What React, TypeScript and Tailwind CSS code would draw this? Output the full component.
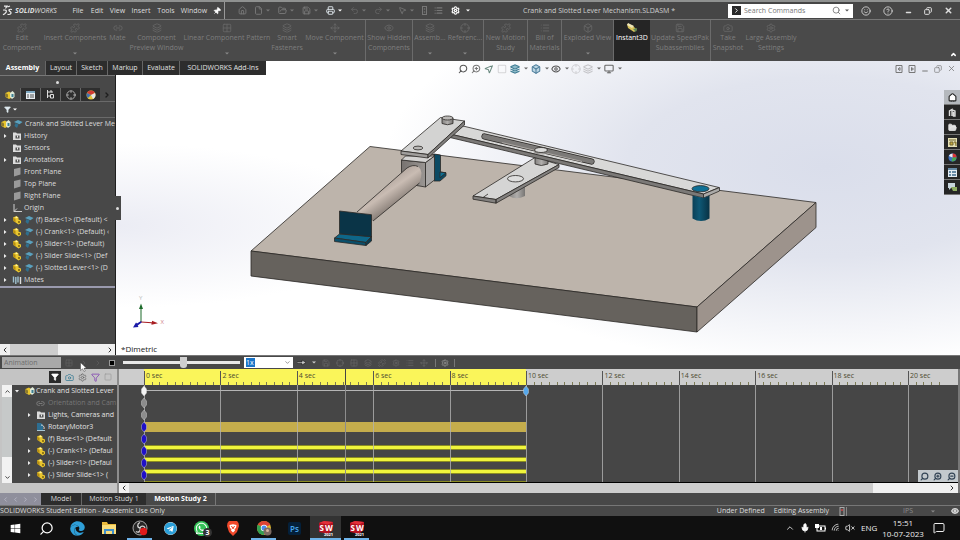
import React from 'react';
import {
  Box, Camera, ChevronDown, ChevronLeft, ChevronRight, ChevronUp, CircleHelp, Copy, Eye, File, Filter,
  FolderOpen, House, List, Link2, Minus, Monitor, MousePointer2, Pin, Printer, Redo2, Save, Search, Settings,
  Smile, Square, Undo2, X, ZoomIn, ZoomOut, Grid2x2, Crosshair, Puzzle, Layers, Mic, Move, MessageSquare, Wifi, VolumeX,
} from 'lucide-react';
import { FaEdge, FaTelegram, FaWhatsapp, FaWindows } from 'react-icons/fa';

type IconType = React.ComponentType<{ size?: number; className?: string; strokeWidth?: number }>;

const Caret = ({ className = 'text-[#8a8a8a]' }: { className?: string }) => (
  <svg viewBox="0 0 4 3" className={`h-[3px] w-1 ${className}`}>
    <path d="M0 .5h4L2 2.5z" fill="currentColor" />
  </svg>
);

/* ---------- title bar ---------- */

const menus = [
  ['File', 'w-[18px]'], ['Edit', 'w-[20px]'], ['View', 'w-[21px]'],
  ['Insert', 'w-[26px]'], ['Tools', 'w-[24px]'], ['Window', 'w-[32px]'],
];

const quick: { icon: IconType; label: string; caret?: boolean; tone: string }[] = [
  { icon: House, label: 'Home', tone: 'text-[#777]' },
  { icon: File, label: 'New', caret: true, tone: 'text-[#777]' },
  { icon: FolderOpen, label: 'Open', caret: true, tone: 'text-[#777]' },
  { icon: Save, label: 'Save', caret: true, tone: 'text-[#777]' },
  { icon: Printer, label: 'Print', caret: true, tone: 'text-[#dfe6ec]' },
  { icon: Undo2, label: 'Undo', caret: true, tone: 'text-[#626262]' },
  { icon: Redo2, label: 'Redo', caret: true, tone: 'text-[#626262]' },
  { icon: MousePointer2, label: 'Select', caret: true, tone: 'text-[#707070]' },
];

function TitleBar() {
  return (
    <header className="flex h-5 shrink-0 items-center border-t-2 border-b border-t-[#8f9190] border-b-[#777] bg-[#464646] text-[#dedede]">
      <div className="flex w-[69px] items-center pl-[2px]">
        <svg viewBox="0 0 11 11" className="h-[11px] w-[11px]" fill="none" stroke="#eee" strokeWidth="1.2">
          <path d="M2 1.2h3L3.500 3.500M1.200 5.200c4-.8 4 1.500 1.500 3.600L1 9.800 M10 4.500c-3-.8-4 .8-2 2 2 1.200 1 3.400-2.500 2.900M5.500 2L8 1" />
        </svg>
        <span className="ml-[2px] text-[7px] leading-[10px] italic"><b>SOLID</b>WORKS</span>
      </div>
      <nav className="flex">
        {menus.map(([m, w]) => (
          <button key={m} className={`${w} text-center text-[7px] leading-[10px]`}>{m}</button>
        ))}
      </nav>
      <button aria-label="Pin menu" className="flex w-[14px] justify-center">
        <Pin size={8} className="rotate-45 fill-white text-white" />
      </button>
      <div className="flex h-full items-center border-l border-[#999] pl-[13px]">
        {quick.map(({ icon: I, label, caret, tone }) => (
          <button key={label} aria-label={label} className={`flex items-center ${caret ? 'w-[24px]' : 'w-[16px]'} ${tone}`}>
            <I size={9} strokeWidth={2.500} />
            {caret && <span className="ml-[3px]"><Caret className={label === 'Print' ? 'text-white' : 'text-[#777]'} /></span>}
          </button>
        ))}
        <button aria-label="Rebuild" className="flex w-[12px]">
          <svg viewBox="0 0 5 9" className="h-[9px] w-[5px]"><rect x=".5" y=".5" width="4" height="8" fill="none" stroke="#777" /><circle cx="2.500" cy="3" r=".8" fill="#777" /><circle cx="2.500" cy="6" r=".8" fill="#777" /></svg>
        </button>
        <button aria-label="File properties" className="w-[17px] text-[#777]"><List size={9} strokeWidth={3} /></button>
        <button aria-label="Options" className="flex items-center text-white"><Settings size={9} strokeWidth={3} /><span className="ml-[6px]"><Caret className="text-white" /></span></button>
      </div>
      <h1 className="flex-1 text-center text-[7px] leading-[10px] font-normal text-[#cfcfcf]">Crank and Slotted Lever Mechanism.SLDASM *</h1>
      <label className="flex h-[14px] w-[125px] items-center bg-white">
        <span className="ml-1 mr-[3px] flex h-[9px] w-[9px] items-center justify-center bg-[#2a2a2a] text-white"><ChevronRight size={7} strokeWidth={3} /></span>
        <input aria-label="Search Commands" placeholder="Search Commands" className="w-0 flex-1 bg-transparent text-[7px] leading-[10px] outline-none placeholder:text-[#777]" />
        <Search size={9} className="text-[#666]" />
        <span className="mx-1"><Caret className="text-[#555]" /></span>
      </label>
      <div className="flex w-[107px] items-center justify-between pr-[7px] pl-2">
        <button aria-label="Account"><Smile size={10} /></button>
        <button aria-label="Help"><CircleHelp size={10} /></button>
        <button aria-label="Minimize" className="pt-1"><Minus size={7} strokeWidth={5} /></button>
        <button aria-label="Restore"><Copy size={8} strokeWidth={3} className="-scale-x-100" /></button>
        <button aria-label="Close"><X size={9} strokeWidth={4} /></button>
      </div>
    </header>
  );
}

/* ---------- ribbon ---------- */

const ribbon: { lines: string[]; w: string; icon: IconType; caret?: boolean; sep?: boolean; on?: boolean }[] = [
  { lines: ['Edit', 'Component'], w: 'w-[44px]', icon: Puzzle },
  { lines: ['Insert Components'], w: 'w-[62px]', icon: Puzzle, caret: true },
  { lines: ['Mate'], w: 'w-[23px]', icon: Link2 },
  { lines: ['Component', 'Preview Window'], w: 'w-[55px]', icon: Layers },
  { lines: ['Linear Component Pattern'], w: 'w-[86px]', icon: Grid2x2, caret: true },
  { lines: ['Smart', 'Fasteners'], w: 'w-[34px]', icon: Layers },
  { lines: ['Move Component'], w: 'w-[62px]', icon: Move, caret: true, sep: true },
  { lines: ['Show Hidden', 'Components'], w: 'w-[47px]', icon: Eye, sep: true },
  { lines: ['Assemb...'], w: 'w-[34px]', icon: Layers, caret: true },
  { lines: ['Referenc...'], w: 'w-[37px]', icon: Crosshair, caret: true, sep: true },
  { lines: ['New Motion', 'Study'], w: 'w-[44px]', icon: Puzzle, sep: true },
  { lines: ['Bill of', 'Materials'], w: 'w-[34px]', icon: List, sep: true },
  { lines: ['Exploded View'], w: 'w-[52px]', icon: Box, caret: true, sep: true },
  { lines: ['Instant3D'], w: 'w-[36px]', icon: Layers, on: true },
  { lines: ['Update SpeedPak', 'Subassemblies'], w: 'w-[61px]', icon: Save, sep: true },
  { lines: ['Take', 'Snapshot'], w: 'w-[34px]', icon: Camera },
  { lines: ['Large Assembly', 'Settings'], w: 'w-[52px]', icon: Settings },
];

function Ribbon() {
  return (
    <div className="flex h-[41px] shrink-0 bg-[#4a4a4a]">
      {ribbon.map(({ lines, w, icon: I, caret, sep, on }) => (
        <button
          key={lines[0]}
          className={`${w} flex shrink-0 flex-col items-center pt-[3px] text-[7px] leading-[10px] whitespace-nowrap ${sep ? 'border-r border-[#6b6b6b]' : ''} ${on ? 'bg-[#252525] text-white' : 'text-[#7e7e7e]'}`}
        >
          {on ? (
            <svg viewBox="0 0 12 10" className="h-[10px] w-3"><path d="M1 1l6 2 4 4-3 2-6-4z" fill="#d9c35a" /><path d="M2 0l6 3-2 2-5-3z" fill="#eee6b8" /><path d="M7 6l4-1-1 4z" fill="#5b8a5a" /></svg>
          ) : (
            <I size={10} className="text-[#686868]" />
          )}
          {lines.map((l) => <span key={l}>{l}</span>)}
          {caret && <span className="mt-[9px] h-[3px]"><Caret className="block text-[#888]" /></span>}
        </button>
      ))}
      <button aria-label="Collapse ribbon" className="ml-auto self-end p-[3px] text-white"><ChevronUp size={7} strokeWidth={5} /></button>
    </div>
  );
}

const commandTabs = [
  ['Assembly', 'w-[45px]'], ['Layout', 'w-[31px]'], ['Sketch', 'w-[31px]'],
  ['Markup', 'w-[35px]'], ['Evaluate', 'w-[37px]'], ['SOLIDWORKS Add-Ins', 'w-[87px]'],
];

const viewTools: { icon: IconType; tone: string; caret?: boolean; w: string }[] = [
  { icon: Search, tone: 'text-[#555] -scale-x-100', w: 'w-[13px]' },
  { icon: ZoomIn, tone: 'text-[#777] -scale-x-100', w: 'w-[13px]' },
  { icon: MousePointer2, tone: 'text-[#6b8a80] rotate-90', w: 'w-[13px]' },
  { icon: Square, tone: 'text-[#d5d5d8]', w: 'w-[13px]' },
  { icon: Layers, tone: 'text-[#3f7c93] fill-[#8db9c8]', caret: true, w: 'w-[21px]' },
  { icon: Box, tone: 'text-[#4f7f9c] fill-[#bcd6e4]', caret: true, w: 'w-[20px]' },
  { icon: Eye, tone: 'text-[#555]', caret: true, w: 'w-[20px]' },
  { icon: Crosshair, tone: 'text-[#d0d0d4]', w: 'w-[12px]' },
  { icon: Layers, tone: 'text-[#c4c4c8]', caret: true, w: 'w-[21px]' },
  { icon: Monitor, tone: 'text-[#666]', caret: true, w: 'w-[20px]' },
];

function TabsAndView() {
  return (
    <div className="flex h-[14px] shrink-0 items-stretch">
      <div role="tablist" className="flex shrink-0 bg-[#4a4a4a]">
        {commandTabs.map(([t, w], i) => (
          <button
            role="tab"
            key={t}
            aria-selected={i === 0}
            className={`${w} text-center text-[7px] leading-[14px] whitespace-nowrap ${i === 0 ? 'bg-[#4a4a4a] font-bold text-white' : 'border-l border-[#666] bg-[#2d2d2d] text-[#e2e2e2]'}`}
          >
            {t}
          </button>
        ))}
      </div>
      <div className="flex flex-1 items-center justify-center pt-px pr-20">
        {viewTools.map(({ icon: I, tone, caret, w }, i) => (
          <button key={i} aria-label={`View tool ${i + 1}`} className={`flex items-center ${w}`}>
            <I size={10} strokeWidth={2.500} className={tone} />
            {caret && <span className="ml-1"><Caret className="text-[#666]" /></span>}
          </button>
        ))}
      </div>
      <div className="flex w-[65px] shrink-0 items-center gap-[5px] pt-px text-[#777]">
        <button aria-label="Previous window"><svg viewBox="0 0 8 8" className="h-2 w-2" fill="none" stroke="currentColor"><path d="M1 .5h6v7H1zM5 2.500L3 4l2 1.500z" /></svg></button>
        <button aria-label="Next window"><svg viewBox="0 0 8 8" className="h-2 w-2" fill="none" stroke="currentColor"><path d="M1 .5h6v7H1zM3.500 2.500l2 1.500-2 1.500z" /></svg></button>
        <button aria-label="Minimize document" className="pt-1"><Minus size={8} strokeWidth={3} /></button>
        <button aria-label="Restore document"><Copy size={8} className="-scale-x-100" /></button>
        <button aria-label="Close document"><X size={9} /></button>
      </div>
    </div>
  );
}

/* ---------- feature tree ---------- */

const PartIcon = () => (
  <svg viewBox="0 0 10 10" className="h-[10px] w-[10px] shrink-0">
    <path d="M1 2.500L4.500 1l2 1.500v2L9 5.500v2.500L6.500 9.500 1.500 6z" fill="#e9c62f" />
    <path d="M1 2.500l2.500 1.500v3.500L1.500 6z" fill="#b58c12" />
    <path d="M3 2.300l1.500-.8 1.500.9-1.500.8z" fill="#fff3a8" />
    <circle cx="7" cy="7" r="1" fill="#7a6010" />
  </svg>
);
const AssemblyIcon = () => (
  <svg viewBox="0 0 10 10" className="h-[10px] w-[10px] shrink-0">
    <path d="M.5 3L4 1.500 6 3v5L4 9 .5 7z" fill="#e9c62f" />
    <path d="M.5 3L3 4.500v3L.5 7z" fill="#8e7a2b" />
    <path d="M5 3l2.500-2L9.500 3v4L7 9 5 7z" fill="#dfe9d8" />
    <path d="M6.500 4h2v3h-2z" fill="#3c7f94" />
  </svg>
);
const MateCap = () => (
  <svg viewBox="0 0 10 10" className="h-[10px] w-[10px] shrink-0">
    <path d="M1 3l4-2 4.500 2-3 2.200z" fill="#5aa0bd" />
    <path d="M2.500 4l3 1.500L4 9 1.500 7z" fill="#2f6f8e" />
  </svg>
);
const FolderIcon = () => (
  <svg viewBox="0 0 10 10" className="h-[10px] w-[10px] shrink-0">
    <path d="M1 1.500h3l1 1h4v6.500H1z" fill="#dcdcdc" />
    <path d="M3.500 4.500h4v3h-4z" fill="#555" /><path d="M5 4.500h1v2H5z" fill="#eee" />
  </svg>
);
const PlaneIcon = () => (
  <svg viewBox="0 0 10 10" className="h-[10px] w-[10px] shrink-0"><path d="M2 2L8.500.5v7L2 9.500z" fill="#9a9a9a" /></svg>
);
const OriginIcon = () => (
  <svg viewBox="0 0 10 10" className="h-[10px] w-[10px] shrink-0" fill="none" stroke="#cfcfcf"><path d="M2 1v7.500H10M2 8.500l3-3" /></svg>
);
const MatesIcon = () => (
  <svg viewBox="0 0 10 10" className="h-[10px] w-[10px] shrink-0" fill="none"><path d="M1.500 1.500v6M3.800 2v7M6 1.500v6" stroke="#9fc0cf" strokeWidth="1.400" /><path d="M8.500 2v7" stroke="#ddd" strokeWidth="1.400" /></svg>
);
const Expand = ({ show, open }: { show: boolean; open?: boolean }) => (
  <svg viewBox="0 0 4 4" className="h-1 w-1 shrink-0">{show && <path d={open ? 'M0 1h4L2 3.500z' : 'M1 0l2.500 2L1 4z'} fill="#eee" />}</svg>
);

const tree: { t: string; icon: React.ReactNode; exp?: boolean }[] = [
  { t: 'History', icon: <FolderIcon />, exp: true },
  { t: 'Sensors', icon: <FolderIcon /> },
  { t: 'Annotations', icon: <FolderIcon />, exp: true },
  { t: 'Front Plane', icon: <PlaneIcon /> },
  { t: 'Top Plane', icon: <PlaneIcon /> },
  { t: 'Right Plane', icon: <PlaneIcon /> },
  { t: 'Origin', icon: <OriginIcon /> },
  { t: '(f) Base<1> (Default) <', icon: <><PartIcon /><MateCap /></>, exp: true },
  { t: '(-) Crank<1> (Default) ‹', icon: <><PartIcon /><MateCap /></>, exp: true },
  { t: '(-) Slider<1> (Default)', icon: <><PartIcon /><MateCap /></>, exp: true },
  { t: '(-) Slider Slide<1> (Def', icon: <><PartIcon /><MateCap /></>, exp: true },
  { t: '(-) Slotted Lever<1> (D', icon: <><PartIcon /><MateCap /></>, exp: true },
  { t: 'Mates', icon: <MatesIcon />, exp: true },
];

function FeaturePanel() {
  return (
    <aside className="relative flex w-[116px] shrink-0 flex-col border-r border-[#1f1f1f] bg-[#484848] text-[#dcdcdc]">
      <div className="flex h-[13px] shrink-0 items-center justify-center border-t border-[#777]"><i className="h-[3px] w-[3px] rounded-full bg-[#ddd]" /></div>
      <div className="flex h-[13px] shrink-0 items-stretch">
        <button aria-label="Feature tree" className="flex w-5 items-center justify-center"><AssemblyIcon /></button>
        <button aria-label="Properties" className="flex w-5 items-center justify-center border-l border-[#666] bg-[#2e2e2e]">
          <svg viewBox="0 0 9 8" className="h-2 w-[9px]"><path d="M0 0h9v8H0z" fill="#e8eef2" /><path d="M0 0h9v2H0z" fill="#7fa9c2" /><path d="M1 4h2M4 4h4M1 6h2M4 6h4" stroke="#555" /></svg>
        </button>
        <button aria-label="Configurations" className="flex w-5 items-center justify-center border-l border-[#666] bg-[#2e2e2e]">
          <svg viewBox="0 0 9 9" className="h-[9px] w-[9px]" fill="none" stroke="#ddd"><path d="M1.500 0v8M1.500 2h4M4 1h2v2M4.500 4.500h3v3.500h-3zM1.500 6h3" /></svg>
        </button>
        <button aria-label="Dimensions" className="flex w-5 items-center justify-center border-l border-[#666] bg-[#2e2e2e]"><Crosshair size={10} className="text-[#bbb]" /></button>
        <button aria-label="Display" className="flex w-5 items-center justify-center border-l border-[#666] bg-[#2e2e2e]">
          <svg viewBox="0 0 10 10" className="h-[10px] w-[10px]"><circle cx="5" cy="5" r="4.500" fill="#e4c53b" /><path d="M5 5L1 3a4.500 4.500 0 0 1 8 0z" fill="#d23b34" /><path d="M5 5l4-2a4.500 4.500 0 0 1-2 6z" fill="#e8e8e8" /><path d="M5 5L1 3a4.500 4.500 0 0 0 1 5z" fill="#4472b0" /></svg>
        </button>
        <button aria-label="More tabs" className="ml-auto w-3 text-[#1d1d1d]"><ChevronRight size={8} strokeWidth={4} /></button>
      </div>
      <button aria-label="Filter tree" className="flex h-[17px] shrink-0 items-center gap-[2px] border-y border-[#6a6a6a] pl-1">
        <Filter size={7} className="fill-[#dfeaf0] text-[#dfeaf0]" /><Caret className="text-white" />
      </button>
      <ul role="tree" className="shrink-0 border-b-2 border-[#9a9aae] text-[7px] leading-3 whitespace-nowrap">
        <li role="treeitem" className="flex h-3 items-center gap-[2px] pl-px"><AssemblyIcon /><MateCap /><span>Crank and Slotted Lever Me</span></li>
        {tree.map(({ t, icon, exp }) => (
          <li role="treeitem" key={t} className="flex h-3 items-center pl-[3px]">
            <Expand show={!!exp} />
            <span className="ml-[5px] flex gap-[2px]">{icon}</span>
            <span className="ml-[2px]">{t}</span>
          </li>
        ))}
      </ul>
      <div className="mt-auto flex h-[11px] shrink-0 items-center bg-[#f0f0f0] text-[#333]">
        <button aria-label="Scroll left" className="flex w-[10px] justify-center"><ChevronLeft size={8} strokeWidth={3} /></button>
        <i className="h-full w-12 bg-[#cdcdcd]" />
        <button aria-label="Scroll right" className="ml-auto flex w-[10px] justify-center"><ChevronRight size={8} strokeWidth={3} /></button>
      </div>
      <button aria-label="Collapse panel" className="absolute top-[121px] -right-[6px] flex h-6 w-[7px] items-center justify-center bg-[#484848]"><i className="h-[3px] w-[3px] rounded-full bg-[#ddd]" /></button>
    </aside>
  );
}

/* ---------- 3D model ---------- */

function Model() {
  return (
    <svg viewBox="116 75 828 280" preserveAspectRatio="xMinYMin meet" className="h-full w-full" stroke="#2b2826" strokeWidth=".8" strokeLinejoin="round">
      <defs>
        <linearGradient id="rod" x1="382" y1="184" x2="396" y2="204" gradientUnits="userSpaceOnUse"><stop offset="0" stopColor="#b3a79f" /><stop offset=".4" stopColor="#c9bcb3" /><stop offset="1" stopColor="#8d837c" /></linearGradient>
        <linearGradient id="post"><stop offset="0" stopColor="#0a4057" /><stop offset=".4" stopColor="#0e5875" /><stop offset="1" stopColor="#083244" /></linearGradient>
        <linearGradient id="pin"><stop offset="0" stopColor="#858381" /><stop offset=".5" stopColor="#b0aeac" /><stop offset="1" stopColor="#777573" /></linearGradient>
        <linearGradient id="block"><stop offset="0" stopColor="#77726f" /><stop offset="1" stopColor="#9a9693" /></linearGradient>
      </defs>
      <path d="M251 251L370 146.500 816 202.500 697 307z" fill="#bdb4ab" />
      <path d="M251 251L697 307V332L251 276z" fill="#66625d" />
      <path d="M697 307L816 202.500V227.500L697 332z" fill="#9d938c" />
      {/* rear bracket */}
      <path d="M434 154l6.500 1v17l5.500.8v3L440 181h-6z" fill="#0b4a64" />
      <path d="M440 172l6 .8-6 5z" fill="#0f6c8f" />
      {/* slider block */}
      <path d="M401.500 160l24 2.500V187l-24-4z" fill="url(#block)" />
      <path d="M425.500 162.500l9-6.500v24l-9 7z" fill="#a9a7a6" />
      <path d="M401.500 160l4-4 29 0-9 6.500z" fill="#d4d3d2" />
      {/* rod */}
      <path d="M357 212L407 168q6-4 11-1.500 6 4 1.500 16.500L373 221z" fill="url(#rod)" stroke="none" />
      <path d="M357 212L407 168q6-4 11-1.500M419.500 183L373 221" fill="none" />
      {/* front bracket */}
      <path d="M339.500 234L334.500 238l31.500 4.500 5.500-6z" fill="#0e6688" />
      <path d="M334.500 238l31.500 4.500v3l-31.500-4z" fill="#0a4f6b" />
      <path d="M366 242.500l5.500-6v4.500l-5.500 4.500z" fill="#083c52" />
      <path d="M339.500 211l32 3.700v22l-32-3z" fill="#0a3447" />
      {/* crank */}
      <path d="M509 186v10q7 4.500 16 0v-10z" fill="url(#pin)" stroke="none" />
      <path d="M473 196L535 157.500l24 7L496 199.500z" fill="#d5d5d4" />
      <path d="M473 196l23 3.500v3.700l-23-4zM496 199.500L559 164.500v3L496 203.200z" fill="#83817f" />
      <ellipse cx="515.500" cy="178.700" rx="8" ry="3.200" fill="#dededd" />
      <path d="M483 197.500l5-3.500" />
      <path d="M535 157v7q6 3 13 0v-7z" fill="url(#pin)" />
      {/* slotted lever */}
      <path d="M450 134L463 126l256 61.500L703.500 194z" fill="#d8d8d7" />
      <path d="M450 134L703.500 194v4L450 137.500z" fill="#7b7977" />
      <path d="M703.500 194l16-6.500v3.500l-16 7z" fill="#aaa9a7" />
      <path d="M484.500 136.500L591.500 161.500" stroke="#2b2826" strokeWidth="6.200" strokeLinecap="round" />
      <path d="M484.500 136.500L591.500 161.500" stroke="#7c7a78" strokeWidth="4.800" strokeLinecap="round" />
      <path d="M502 142.500L582 161.500" stroke="#aaa6a2" strokeWidth="1" />
      <path d="M534.500 150v3q6 3 13 0v-3z" fill="url(#pin)" stroke="none" />
      <ellipse cx="541" cy="150" rx="6.500" ry="2.500" fill="#dcdcdb" />
      {/* upper link */}
      <path d="M401 151L440.500 117.500l24 3.500L428 154.500z" fill="#d3d3d2" />
      <path d="M401 151l27 3.500v3.500l-27-3.500z" fill="#a09e9c" />
      <path d="M428 154.500L464.500 121v4L428 158z" fill="#7f7d7b" />
      <ellipse cx="418" cy="148" rx="4.800" ry="1.900" fill="#b9b8b6" />
      <path d="M442 118v5.500q5.500 2.500 11 0V118z" fill="url(#pin)" />
      <ellipse cx="447.500" cy="118" rx="5.500" ry="2" fill="#bbb9b7" />
      {/* fixed post */}
      <path d="M692.500 195.500l11 2.500 6-2.500V218.500q-8.500 5-17 0z" fill="url(#post)" stroke="none" />
      <ellipse cx="700.500" cy="188.700" rx="8.500" ry="3.100" fill="#0f6f95" />
      {/* triad */}
      <g stroke="none" fontFamily="'Open Sans', sans-serif" fontSize="6">
        <path d="M140.500 322V309h-1.500l2-5.500 2 5.500h-1.500V322z" fill="#1d6b2b" />
        <path d="M141 321.500l11 .8v-1.500l6 2.500-6.500 1.500v-1.500l-10.500-.8z" fill="#a81d22" />
        <path d="M141 321l-4 2.500-1-1-3 5 5.500-.5-.8-1.500 4-3z" fill="#1a1aa8" />
        <text x="139" y="300" fill="#b9b9b9">Y</text>
        <text x="160.500" y="324" fill="#d0868a">X</text>
      </g>
    </svg>
  );
}

const taskPane: [string, React.ReactNode][] = [
  ['Home', <House size={9} className="fill-white text-[#222]" strokeWidth={3} />],
  ['Resources', <svg viewBox="0 0 9 9" className="h-[9px] w-[9px]" fill="none" stroke="#ddd" strokeWidth="1.400"><path d="M1.500 8V3L4 1.500V8M4 2l3 1v5H5.500V4" /></svg>],
  ['File explorer', <FolderOpen size={9} className="fill-[#ddd] text-[#eee]" />],
  ['View palette', <svg viewBox="0 0 9 9" className="h-[9px] w-[9px]"><path d="M0 0h9v9H0z" fill="#e5e0b4" /><path d="M1 2h7M2 4h3v3H2zM6 4h2v4" stroke="#6e6532" fill="#c9a93c" /></svg>],
  ['Appearances', <svg viewBox="0 0 9 9" className="h-[9px] w-[9px]"><circle cx="4.500" cy="4.500" r="4" fill="#3d6fc0" /><path d="M4.500 4.500V.5a4 4 0 0 1 4 4z" fill="#d33" /><path d="M4.500 4.500l4 0a4 4 0 0 1-5 3.800z" fill="#4aa84e" /><path d="M4.500 4.500L.8 3A4 4 0 0 1 4.500.5z" fill="#eee" /></svg>],
  ['Properties', <svg viewBox="0 0 9 9" className="h-[9px] w-[9px]"><path d="M0 0h9v9H0z" fill="#e4edf3" /><path d="M0 1h9M1 4h2M4 4h4M1 7h2M4 7h4" stroke="#3e6b8d" strokeWidth="1.300" /></svg>],
  ['Forum', <svg viewBox="0 0 9 9" className="h-[9px] w-[9px]"><path d="M0 0h7v5H3L1 7V5H0z" fill="#c8d6dd" /><path d="M3 4h6v4H5z" fill="#8fae63" /></svg>],
];

function Workspace() {
  return (
    <div className="flex min-h-0 flex-1">
      <FeaturePanel />
      <main className="relative min-w-0 flex-1">
        <Model />
        <p className="absolute bottom-0 left-[5px] text-[8px] leading-[12px] text-[#222]">*Dimetric</p>
      </main>
      <div className="mt-[15px] w-4 shrink-0">
        {taskPane.map(([label, icon], i) => (
          <button key={label} aria-label={label} className={`flex h-[15px] w-full items-center justify-center border-b border-[#777] ${i === 0 ? 'bg-[#b4b8bd]' : 'bg-[#262626]'}`}>{icon}</button>
        ))}
      </div>
    </div>
  );
}

/* ---------- motion study ---------- */

const PX_PER_SEC = 38.2;
const START = 25;
const at = (sec: number) => START + sec * PX_PER_SEC;
const labels = [0, 2, 4, 6, 8, 10, 12, 14, 16, 18, 20];
const ticks = Array.from({ length: 53 }, (_, i) => (i * 2) / 5);

function MotionToolbar() {
  return (
    <div className="flex h-[14px] shrink-0 items-center border-t border-[#777] bg-[#484848] text-[#707070]">
      <select aria-label="Study type" className="ml-[2px] h-[11px] w-[59px] appearance-none bg-[#a9a9a9] pl-[2px] text-[7px] leading-[10px] text-[#6e6e6e]"><option>Animation</option></select>
      <div className="flex w-[56px] items-center justify-between pr-[2px] pl-1">
        <button aria-label="Calculate"><Grid2x2 size={8} className="text-[#606060]" /></button>
        <button aria-label="Play from start"><ChevronRight size={8} className="text-[#606060]" /></button>
        <button aria-label="Play"><ChevronRight size={8} className="text-[#606060]" /></button>
        <button aria-label="Stop" className="h-[6px] w-[6px] border border-[#999] bg-black" />
      </div>
      <input
        type="range" aria-label="Time" min={0} max={100} defaultValue={52}
        className="ml-[6px] h-[10px] w-[117px] appearance-none bg-transparent [&::-webkit-slider-runnable-track]:h-[3px] [&::-webkit-slider-runnable-track]:bg-[#e8e8e8] [&::-webkit-slider-thumb]:-mt-1 [&::-webkit-slider-thumb]:h-[11px] [&::-webkit-slider-thumb]:w-[7px] [&::-webkit-slider-thumb]:appearance-none [&::-webkit-slider-thumb]:rounded-b-[3px] [&::-webkit-slider-thumb]:bg-[#cfcfcf]"
      />
      <label className="ml-1 flex h-[11px] w-[49px] items-center justify-between bg-white px-[2px]">
        <select aria-label="Playback speed" className="h-[9px] w-[9px] appearance-none bg-[#1a74c8] text-[7px] leading-[9px] text-white"><option>1x</option></select>
        <ChevronDown size={7} className="text-[#555]" />
      </label>
      <div className="flex items-center gap-[6px] pl-[4px]">
        <button aria-label="Playback mode" className="text-[#1c1c1c]"><svg viewBox="0 0 9 7" className="h-[7px] w-[9px]"><path d="M0 3h5V1l4 2.500L5 6V4.500H0z" fill="#c4c4c4" stroke="#1c1c1c" strokeWidth=".6" /></svg></button>
        <Caret className="text-[#ccc]" />
        {[Save, Crosshair, Grid2x2, Layers, Puzzle, Settings, List, Move].map((I, i) => (
          <button key={i} aria-label={`Motion tool ${i + 1}`} className="text-[#686868]"><I size={8} /></button>
        ))}
      </div>
      <button aria-label="Motion study properties" className="ml-[7px] border-x border-[#777] px-[5px] text-[#8a8a8a]"><Settings size={8} strokeWidth={3} /></button>
    </div>
  );
}

const studyRows: { t: string; icon: React.ReactNode; exp?: boolean; dim?: boolean }[] = [
  { t: 'Orientation and Cam', icon: <Link2 size={9} className="text-[#8a8a8a]" />, dim: true },
  { t: 'Lights, Cameras and', icon: <FolderIcon />, exp: true },
  { t: 'RotaryMotor3', icon: <svg viewBox="0 0 10 10" className="h-[10px] w-[10px]"><path d="M1 1h4l2 2v5H1z" fill="#2d6e92" /><path d="M5 3a3 3 0 0 1 3 4" fill="none" stroke="#ddd" /><path d="M1 8h8v1H1z" fill="#a9c7d6" /></svg> },
  { t: '(f) Base<1> (Default', icon: <PartIcon />, exp: true },
  { t: '(-) Crank<1> (Defaul', icon: <PartIcon />, exp: true },
  { t: '(-) Slider<1> (Defaul', icon: <PartIcon />, exp: true },
  { t: '(-) Slider Slide<1> (', icon: <PartIcon />, exp: true },
  { t: '', icon: <PartIcon /> },
];

const tracks: { key: string; bar?: 'motor' | 'part' | 'line' }[] = [
  { key: '#f4f4f4', bar: 'line' }, { key: '#8c8c8c' }, { key: '#8c8c8c' }, { key: '#2010c8', bar: 'motor' },
  { key: '#2010c8' }, { key: '#2010c8', bar: 'part' }, { key: '#2010c8', bar: 'part' },
  { key: '#2010c8', bar: 'part' }, { key: '#2010c8', bar: 'part' },
];

const barStyle = {
  motor: 'h-[10px] mt-px bg-[#c5ad4c]',
  part: 'h-[5px] bg-[#f0f53c] border-y border-[#8b8c22]',
  line: 'h-px mt-[5px] bg-[#b5b5b5]',
};

const KeyMark = ({ fill }: { fill: string }) => (
  <svg viewBox="0 0 6 10" className="block h-[10px] w-[6px]"><path d="M3 0l2.500 3v4L3 10 .5 7V3z" fill={fill} stroke="#ddd" strokeWidth=".4" /></svg>
);

function MotionStudy() {
  return (
    <section className="flex h-[124px] shrink-0">
      <div className="flex w-[119px] shrink-0 flex-col border-r-2 border-[#8d8d8d] bg-[#c4c4c4]">
        <div className="flex h-4 shrink-0 items-center gap-1 pl-[49px]">
          <button aria-label="No filter" className="flex h-3 w-3 items-center justify-center bg-[#2a2a2a]"><Filter size={8} className="fill-white text-white" /></button>
          <button aria-label="Filter animated"><Camera size={9} className="text-[#2f7792]" /></button>
          <button aria-label="Filter driving"><Settings size={9} className="text-[#666]" /></button>
          <button aria-label="Filter selected"><Filter size={9} className="text-[#7e3bb0]" /></button>
          <button aria-label="Filter results"><Square size={8} className="text-[#9a9a9a]" /></button>
        </div>
        <div className="flex h-[98px] shrink-0">
          <div className="ml-[2px] flex w-[10px] flex-col items-center bg-[#f2f2f2] text-[#333]">
            <button aria-label="Scroll up" className="flex h-3 items-center"><ChevronUp size={7} strokeWidth={3} /></button>
            <i className="h-[60px] w-full bg-[#c6c9c9]" />
            <button aria-label="Scroll down" className="mt-auto flex h-3 items-center"><ChevronDown size={7} strokeWidth={3} /></button>
          </div>
          <ul role="tree" className="min-w-0 flex-1 overflow-hidden bg-[#464646] text-[7px] leading-3 whitespace-nowrap text-[#e2e2e2]">
            <li role="treeitem" className="flex h-3 items-center pl-[3px]"><Expand show open /><span className="ml-[6px] mr-px"><AssemblyIcon /></span>Crank and Slotted Lever</li>
            {studyRows.map(({ t, icon, exp, dim }) => (
              <li role="treeitem" key={t} className={`flex h-3 items-center pl-[15px] ${dim ? 'text-[#777]' : ''}`}>
                <Expand show={!!exp} />
                <span className="ml-[5px] flex w-[12px]">{icon}</span>
                <span>{t}</span>
              </li>
            ))}
          </ul>
        </div>
      </div>
      <div className="flex min-w-0 flex-1 flex-col border-r-2 border-[#777]">
        <div className="relative h-4 shrink-0 overflow-hidden bg-[#cdcdcd] text-[7px] leading-[10px] text-[#4c4a30]">
          <div className="absolute inset-y-0 bg-[#faf55a]" style={{ left: at(0), width: 10 * PX_PER_SEC }} />
          {ticks.map((s) => <i key={s} className="absolute bottom-0 h-[3px] w-px bg-[#7d7b55]" style={{ left: at(s / 2) }} />)}
          {ticks.map((s) => <i key={s} className="absolute bottom-0 h-[3px] w-px bg-[#7d7b55]" style={{ left: at(s / 2 + 10.4) }} />)}
          {labels.map((s) => (
            <span key={s} className="absolute top-[2px] h-[14px] border-l border-[#555] pl-px whitespace-nowrap" style={{ left: at(s) }}>{s} sec</span>
          ))}
          <i className="absolute inset-y-0 w-px bg-[#444]" style={{ left: at(5.250) }} />
        </div>
        <div className="relative h-[98px] shrink-0 overflow-hidden border-b border-black bg-[#464646]">
          {tracks.map(({ bar }, i) => (
            <div key={i} className="flex h-3 items-start">
              {bar && <div className={barStyle[bar]} style={{ marginLeft: at(0), width: 10 * PX_PER_SEC }} />}
            </div>
          ))}
          {labels.map((s) => <i key={s} className="absolute inset-y-0 w-px bg-[#b0b0b0]/80" style={{ left: at(s) }} />)}
          <i className="absolute inset-y-0 w-px bg-[#8d8d8d]" style={{ left: at(5.250) }} />
          {tracks.map(({ key }, i) => (
            <span key={i} className="absolute -ml-[3px]" style={{ left: at(0), top: i * 12 + 1 }}><KeyMark fill={key} /></span>
          ))}
          <span className="absolute top-px -ml-[3px]" style={{ left: at(10) }}><KeyMark fill="#56a8ec" /></span>
          <div className="absolute right-0 bottom-0 flex h-3 w-10 items-center justify-around bg-[#c3c9cd] text-[#345]">
            <button aria-label="Zoom to fit"><Search size={9} strokeWidth={3} className="-scale-x-100" /></button>
            <button aria-label="Zoom in"><ZoomIn size={9} strokeWidth={3} className="-scale-x-100" /></button>
            <button aria-label="Zoom out"><ZoomOut size={9} strokeWidth={3} className="-scale-x-100" /></button>
          </div>
        </div>
        <div className="flex flex-1 items-center bg-[#f0f0f0] text-[#333]">
          <button aria-label="Scroll left" className="flex w-[10px] justify-center"><ChevronLeft size={8} strokeWidth={3} /></button>
          <i className="h-full flex-1 bg-[#cdcdcd]" />
          <button aria-label="Scroll right" className="flex w-[85px] justify-end pr-[2px]"><ChevronRight size={8} strokeWidth={3} /></button>
        </div>
      </div>
    </section>
  );
}

function StudyTabs() {
  return (
    <div className="flex h-3 shrink-0 bg-[#484848] text-[7px] leading-3 text-[#dcdcdc]">
      <div className="flex w-[41px] items-center justify-around bg-[#8f8f9c] text-[#c8c8d8]">
        {[ChevronLeft, ChevronLeft, ChevronRight, ChevronRight].map((I, i) => <button key={i} aria-label={`Scroll tabs ${i + 1}`}><I size={7} /></button>)}
      </div>
      <div role="tablist" className="flex">
        <button role="tab" className="w-[40px] bg-[#2d2d2d]">Model</button>
        <button role="tab" className="w-[65px] border-l border-[#666] bg-[#2d2d2d]">Motion Study 1</button>
        <button role="tab" aria-selected className="w-[70px] border-r border-[#777] font-bold text-white">Motion Study 2</button>
      </div>
    </div>
  );
}

function StatusBar() {
  return (
    <footer className="flex h-[11px] shrink-0 items-center border-t border-[#777] bg-[#484848] text-[7px] leading-[10px] text-[#dcdcdc]">
      <span>SOLIDWORKS Student Edition - Academic Use Only</span>
      <span className="ml-auto">Under Defined</span>
      <span className="ml-[9px]">Editing Assembly</span>
      <svg viewBox="0 0 8 9" className="ml-[10px] h-[9px] w-2"><rect x="1" y=".5" width="4" height="8" fill="none" stroke="#aaa" /><circle cx="3" cy="3" r="1" fill="#c44" /><path d="M7.500 0v9" stroke="#888" /></svg>
      <button className="ml-[56px] flex items-center text-[#8a8a8a]">IPS<span className="ml-[18px]"><Caret /></span></button>
      <button aria-label="Tags" className="ml-[16px] pr-px"><Eye size={8} strokeWidth={4} /></button>
    </footer>
  );
}

/* ---------- taskbar ---------- */

const SwIcon = () => (
  <svg viewBox="0 0 16 16" className="h-4 w-4">
    <path d="M1 3l5-2 9 1v8l-5 4-9-2z" fill="#b5121f" /><path d="M1 3l5-2 9 1-5 2.500z" fill="#e2313c" />
    <text x="1.500" y="11" fontSize="8" fontWeight="700" fill="#fff" fontFamily="Open Sans, sans-serif">S</text>
    <text x="7" y="11" fontSize="8" fontWeight="700" fill="#fff" fontFamily="Open Sans, sans-serif">W</text>
    <text x="6" y="15.500" fontSize="4" fontWeight="700" fill="#fff" fontFamily="Open Sans, sans-serif">2021</text>
  </svg>
);

const apps: { n: string; icon: React.ReactNode; run?: boolean; on?: boolean }[] = [
  { n: 'Start', icon: <FaWindows size={11} className="text-white" /> },
  { n: 'Search', icon: <Search size={15} className="-scale-x-100 text-white" /> },
  { n: 'Edge', icon: <FaEdge size={15} className="text-[#2f9fd8]" /> },
  { n: 'File Explorer', icon: <svg viewBox="0 0 16 14" className="h-[14px] w-4"><path d="M1 1h5l1 2h8v10H1z" fill="#e9b93d" /><path d="M1 4h14v9H1z" fill="#f9dd7c" /><path d="M3 8h10v5h-2v-3H5v3H3z" fill="#3f8fcb" /></svg> },
  { n: 'OBS', run: true, icon: <svg viewBox="0 0 16 16" className="h-4 w-4"><circle cx="8" cy="8" r="7" fill="#272727" stroke="#c9c9c9" strokeWidth=".8" /><path d="M8 2.500c-3 1-3 5 0 5.500M4 11.500c2.500 1.500 5 0 4-3.500M13 8c-1-2.500-4-2.500-5 0" stroke="#d5d5d5" fill="none" strokeWidth="1.300" /><circle cx="11.500" cy="11.500" r="3.700" fill="#e01b1b" /></svg> },
  { n: 'Telegram', icon: <FaTelegram size={13} className="rounded-full bg-white text-[#2b9fd8]" /> },
  { n: 'WhatsApp', icon: <span className="relative flex h-[15px] w-[15px] items-center justify-center rounded-full bg-[#35c258]"><FaWhatsapp size={13} className="text-white" /><b className="absolute -right-[3px] -bottom-px flex h-[9px] w-[9px] items-center justify-center rounded-full bg-[#333] text-[7px] leading-[9px] text-white">3</b></span> },
  { n: 'Brave', icon: <svg viewBox="0 0 14 15" className="h-[15px] w-[14px]"><path d="M3 0h8l1.500 2L13 5l-2 6-4 4-4-4L1 5l.5-3z" fill="#f0492b" /><path d="M3.500 4L7 3.300l3.500.7-.5 3-1.500 1 .5 1.500L7 11.500 5 9.500 5.500 8 4 7z" fill="#fff" /><path d="M5 5.500l1.500.5L7 8l.5-2L9 5.500" stroke="#f0492b" fill="none" /></svg> },
  { n: 'Chrome', run: true, icon: <svg viewBox="0 0 16 16" className="h-4 w-4"><circle cx="8" cy="8" r="7" fill="#e0b92f" /><path d="M8 8L1.800 4.800a7 7 0 0 1 12.500 0z" fill="#dc4335" /><path d="M8 8l0 7A7 7 0 0 1 1.800 4.800z" fill="#33a052" /><circle cx="8" cy="8" r="3.200" fill="#fff" /><circle cx="8" cy="8" r="2.500" fill="#4a8af0" /><circle cx="11.500" cy="11.500" r="4" fill="#7d6b62" /><circle cx="11.500" cy="10.500" r="1.500" fill="#d9b89f" /></svg> },
  { n: 'Photoshop', icon: <span className="flex h-[13px] w-[13px] items-center justify-center rounded-[2px] bg-[#04203a] text-[8px] leading-[13px] font-semibold text-[#4aa7ee]">Ps</span> },
  { n: 'SOLIDWORKS', run: true, on: true, icon: <SwIcon /> },
  { n: 'SOLIDWORKS 2021', run: true, icon: <SwIcon /> },
];

function Taskbar() {
  return (
    <div className="flex h-6 shrink-0 bg-[#101010] text-[#eee]">
      {apps.map(({ n, icon, run, on }) => (
        <button key={n} aria-label={n} className={`relative flex w-[31px] items-center justify-center ${on ? 'bg-[#333]' : ''}`}>
          {icon}
          {run && <i className={`absolute bottom-0 h-[2px] bg-[#6fb4ea] ${on ? 'w-full' : 'w-[25px]'}`} />}
        </button>
      ))}
      <div className="ml-auto flex items-center">
        <button aria-label="Hidden icons" className="w-[15px]"><ChevronUp size={10} /></button>
        <Mic size={10} className="mr-[5px] fill-white" />
        <svg viewBox="0 0 11 8" className="mr-[5px] h-2 w-[11px]"><rect x="2" y="2" width="8" height="5" fill="none" stroke="#fff" /><path d="M0 0h4v4H0zM5 3h2v3H5zM10 3.500h1v2h-1z" fill="#fff" /></svg>
        <Wifi size={10} className="mr-1 -rotate-45 text-[#ccc]" />
        <VolumeX size={10} className="mr-[6px]" />
        <span className="w-[17px] text-[8px] leading-[10px]">ENG</span>
        <time className="ml-1 w-[42px] text-center text-[8px] leading-[11px]">15:51<br />10-07-2023</time>
        <button aria-label="Notifications" className="mr-[15px] ml-[9px]"><MessageSquare size={12} /></button>
      </div>
    </div>
  );
}

export default function App() {
  return (
    <div className="relative flex h-screen flex-col overflow-hidden font-['Open_Sans','Noto_Sans',sans-serif]">
      <TitleBar />
      <Ribbon />
      <div className="flex min-h-0 flex-1 flex-col bg-white bg-[radial-gradient(ellipse_46%_68%_at_86%_36%,#dadeeb_0%,#e1e4ee_45%,transparent_100%),radial-gradient(ellipse_30%_28%_at_12%_56%,#ebecf4_0%,transparent_100%)]">
        <TabsAndView />
        <Workspace />
      </div>
      <MotionToolbar />
      <MotionStudy />
      <StudyTabs />
      <StatusBar />
      <Taskbar />
      <svg viewBox="0 0 7 10" className="absolute top-[362px] left-[80px] h-[10px] w-[7px]"><path d="M.5.5v8l2-1.700L4 9.500l1.300-.6L4 6.300h2.600z" fill="#fff" stroke="#222" strokeWidth=".4" /></svg>
    </div>
  );
}
